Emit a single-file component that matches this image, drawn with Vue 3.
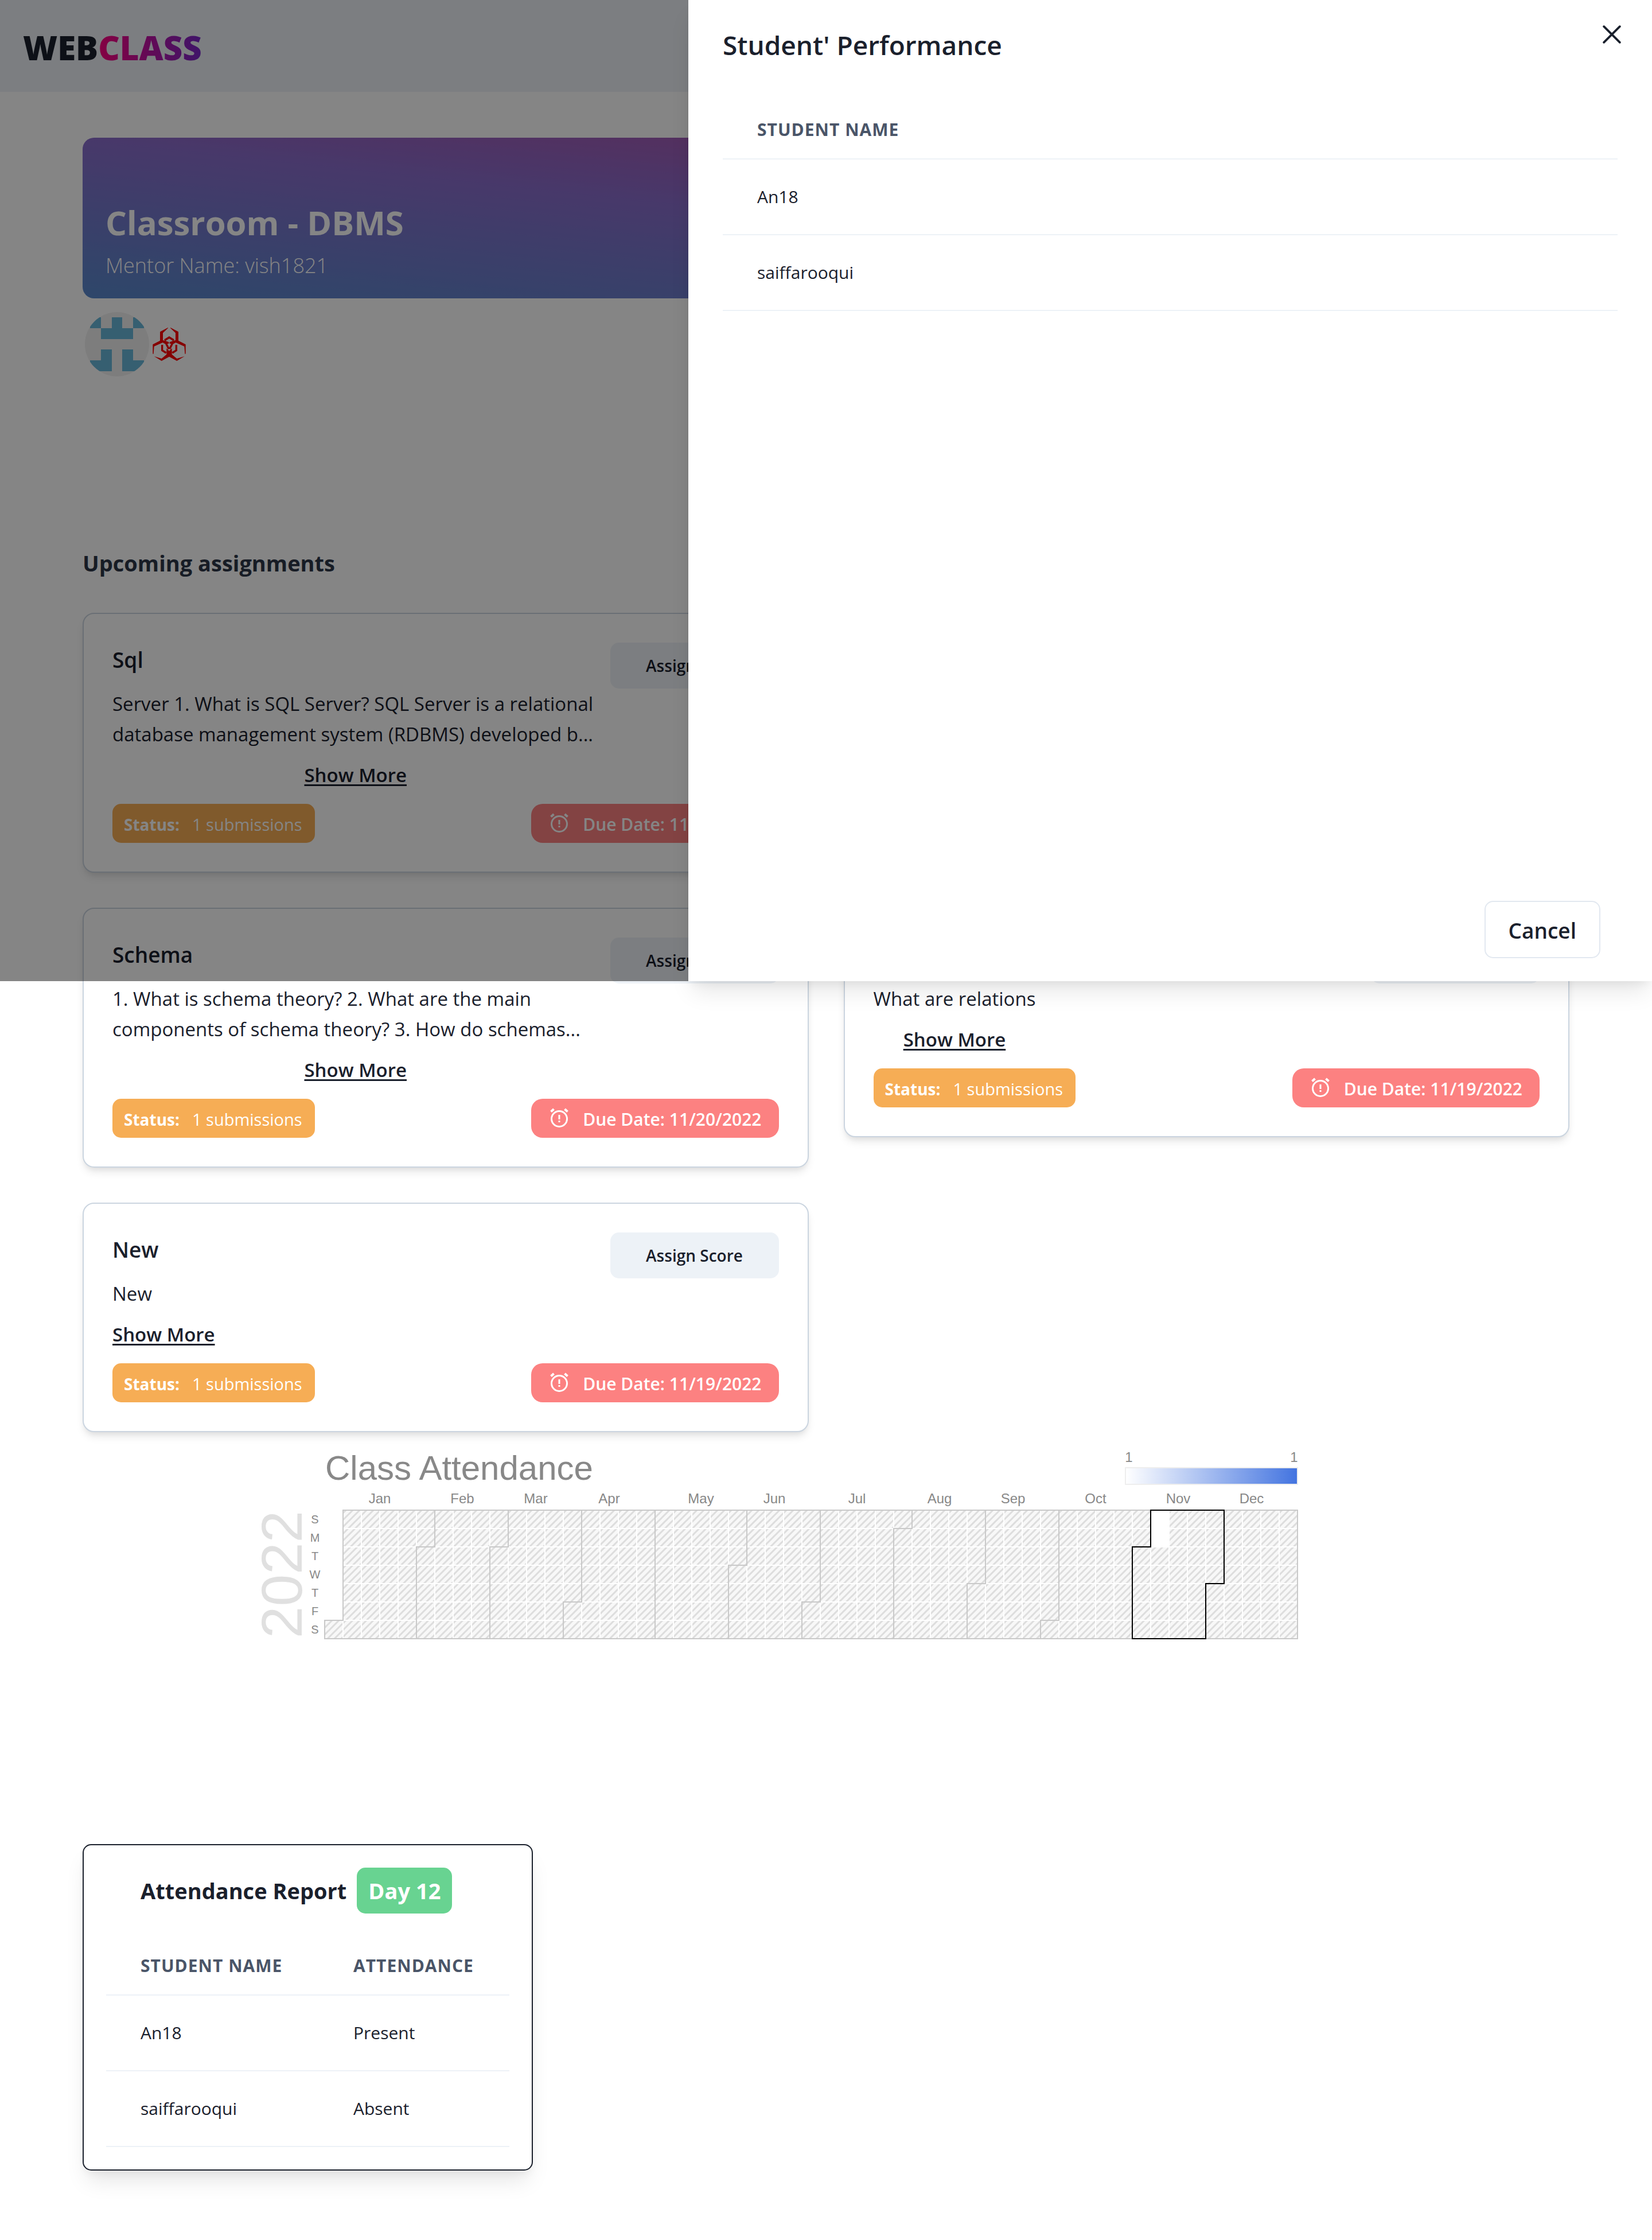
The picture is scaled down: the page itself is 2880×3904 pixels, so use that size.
<script setup>
const assignments = [
  { title: 'Sql', place: 'left', text: 'Server 1. What is SQL Server? SQL Server is a relational database management system (RDBMS) developed b...', due: '11/20/2022' },
  { title: 'Schema', place: 'left', text: '1. What is schema theory? 2. What are the main components of schema theory? 3. How do schemas...', due: '11/20/2022' },
  { title: '', place: 'right', text: 'What are relations', due: '11/19/2022' },
  { title: 'New', place: 'left', text: 'New', due: '11/19/2022' },
]

const students = ['An18', 'saiffarooqui']
const report = [
  { name: 'An18', status: 'Present' },
  { name: 'saiffarooqui', status: 'Absent' },
]

// 5x5 identicon, as [column, row] pairs of filled cells
const identicon = [[0, 0], [2, 0], [4, 0], [1, 1], [2, 1], [3, 1], [1, 3], [3, 3], [0, 4], [1, 4], [3, 4], [4, 4]]

// Calendar chart geometry
const CELL = 32
const LEFT = 126
const TOP = 113
const WEEKS = 53
const bottom = TOP + 7 * CELL
const right = LEFT + WEEKS * CELL
const yearOffset = new Date(2022, 0, 1).getDay()

function slot(month) {
  const day = Math.round((Date.UTC(2022, month, 1) - Date.UTC(2022, 0, 1)) / 86400000) + yearOffset
  return { x: LEFT + Math.floor(day / 7) * CELL, y: TOP + (day % 7) * CELL, row: day % 7 }
}

// Left-hand edge of a month, drawn from the bottom of the grid to its top
function edge(month) {
  const s = slot(month)
  return s.row === 0
    ? [[s.x, bottom], [s.x, TOP]]
    : [[s.x, bottom], [s.x, s.y], [s.x + CELL, s.y], [s.x + CELL, TOP]]
}
const toPath = (points) => 'M' + points.map((p) => p.join(' ')).join('L')

const yearOutline = toPath([...edge(0), [right, TOP], [right, bottom]]) + 'Z'
const monthEdges = Array.from({ length: 11 }, (_, i) => toPath(edge(i + 1)))
const november = toPath([...edge(10), ...edge(11).reverse()]) + 'Z'
const gridLines =
  Array.from({ length: WEEKS - 1 }, (_, i) => `M${LEFT + (i + 1) * CELL} ${TOP}V${bottom}`).join('') +
  Array.from({ length: 6 }, (_, i) => `M${LEFT} ${TOP + (i + 1) * CELL}H${right}`).join('')

const months = [
  ['Jan', 222], ['Feb', 366], ['Mar', 494], ['Apr', 622], ['May', 782], ['Jun', 910],
  ['Jul', 1054], ['Aug', 1198], ['Sep', 1326], ['Oct', 1470], ['Nov', 1614], ['Dec', 1742],
]
const weekdays = ['S', 'M', 'T', 'W', 'T', 'F', 'S']
</script>

<template>
  <div class="page">
    <header class="topbar">
      <div class="logo">WEB<span>CLASS</span></div>
    </header>

    <main class="content">
      <section class="banner">
        <h1>Classroom - DBMS</h1>
        <p>Mentor Name: vish1821</p>
      </section>

      <div class="avatars">
        <svg class="avatar" viewBox="0 0 112 112" aria-hidden="true">
          <defs>
            <clipPath id="round"><circle cx="56" cy="56" r="56" /></clipPath>
          </defs>
          <g clip-path="url(#round)">
            <rect width="112" height="112" fill="#f0f0f0" />
            <g transform="translate(9 9) scale(18.8)" fill="#68b7d9" shape-rendering="crispEdges">
              <rect v-for="[x, y] in identicon" :key="`${x}-${y}`" :x="x" :y="y" width="1" height="1" />
            </g>
          </g>
        </svg>
        <svg class="hazard" viewBox="0 0 172 174" aria-hidden="true">
          <g fill="#ff0000">
            <path d="M79 0L38 22V68L0 88V137H4L7 98L52 78L66 86L84 83V76L66 69L53 66V28L80 2Z" />
            <path d="M93 0L134 22V68L172 88V137H168L165 98L120 78L106 86L88 83V76L106 69L119 66V28L92 2Z" />
            <path d="M7 150L46 162L72 140V108L86 122L100 108V140L126 162L166 150L126 174L86 152L46 174Z" />
          </g>
          <g fill="none" stroke="#ff0000" stroke-width="10">
            <path d="M62 66L86 51L110 66" />
            <path d="M49 90V119L70 132" />
            <path d="M123 90V119L102 132" />
            <path d="M70 84L84 112" />
            <path d="M102 84L88 112" />
          </g>
        </svg>
      </div>

      <h2 class="section-title">Upcoming assignments</h2>

      <section class="assignments">
        <article v-for="(a, i) in assignments" :key="i" class="card" :class="a.place">
          <div class="card-top">
            <div class="card-text">
              <h3>{{ a.title }}</h3>
              <div class="description">
                <p>{{ a.text }}</p>
                <button type="button" class="more">Show More</button>
              </div>
            </div>
            <button type="button" class="assign">Assign Score</button>
          </div>
          <div class="card-bottom">
            <div class="status"><b>Status:</b><span>1 submissions</span></div>
            <div class="due">
              <svg viewBox="0 0 34 34" aria-hidden="true" fill="none" stroke="#fff" stroke-width="3">
                <circle cx="17" cy="19" r="13.5" />
                <path d="M2.5 6.5L7.5 2M31.5 6.5L26.5 2" stroke-width="4" />
                <path d="M17 12V20M17 22V25" />
              </svg>
              <span>Due Date: {{ a.due }}</span>
            </div>
          </div>
        </article>
      </section>

      <svg class="calendar" viewBox="0 0 1840 360" role="img" aria-label="Class Attendance">
        <defs>
          <pattern id="hatch" width="12" height="12" patternUnits="userSpaceOnUse">
            <rect width="12" height="12" fill="#f8f8f8" />
            <path d="M-2 14L14 -2M-2 2L2 -2M10 14L14 10" stroke="#dddddd" stroke-width="3" />
          </pattern>
          <linearGradient id="scale">
            <stop offset="0" stop-color="#ffffff" />
            <stop offset="1" stop-color="#4374e0" />
          </linearGradient>
        </defs>

        <text x="127" y="60" class="chart-title">Class Attendance</text>
        <text x="1528" y="29" class="label" text-anchor="middle">1</text>
        <text x="1816" y="29" class="label" text-anchor="middle">1</text>
        <rect x="1522" y="39" width="300" height="29" fill="url(#scale)" stroke="#eeeeee" stroke-width="2" />

        <text v-for="[name, x] in months" :key="name" :x="x" y="101" class="label" text-anchor="middle">{{ name }}</text>
        <text v-for="(d, i) in weekdays" :key="i" x="109" :y="136 + i * 32" class="day" text-anchor="middle">{{ d }}</text>
        <text transform="translate(86 225) rotate(-90)" class="year" text-anchor="middle">2022</text>

        <path :d="yearOutline" fill="url(#hatch)" />
        <path :d="gridLines" stroke="#ffffff" stroke-width="2" />
        <rect :x="LEFT + 45 * CELL" :y="TOP" :width="CELL" :height="2 * CELL" fill="#ffffff" />
        <g fill="none" stroke="#c9c9c9" stroke-width="2">
          <path v-for="(d, i) in monthEdges" :key="i" :d="d" />
          <path :d="yearOutline" />
        </g>
        <path :d="november" fill="none" stroke="#000000" stroke-width="2" />
      </svg>

      <section class="report">
        <div class="report-head">
          <h2>Attendance Report</h2>
          <span class="badge">Day 12</span>
        </div>
        <table>
          <thead>
            <tr><th class="name">Student Name</th><th>Attendance</th></tr>
          </thead>
          <tbody>
            <tr v-for="r in report" :key="r.name"><td>{{ r.name }}</td><td>{{ r.status }}</td></tr>
          </tbody>
        </table>
      </section>
    </main>

    <div class="overlay">
      <aside class="drawer" role="dialog" aria-labelledby="drawer-title">
        <button type="button" class="close" aria-label="Close">
          <svg viewBox="0 0 30 30" aria-hidden="true"><path d="M2 2L28 28M28 2L2 28" stroke="#1a202c" stroke-width="3.5" stroke-linecap="round" /></svg>
        </button>
        <h2 id="drawer-title">Student' Performance</h2>
        <div class="drawer-body">
          <table>
            <thead>
              <tr><th>Student Name</th></tr>
            </thead>
            <tbody>
              <tr v-for="s in students" :key="s"><td>{{ s }}</td></tr>
            </tbody>
          </table>
        </div>
        <footer><button type="button" class="cancel">Cancel</button></footer>
      </aside>
    </div>
  </div>
</template>

<style>
body {
  margin: 0;
  background: #ffffff;
}
</style>

<style scoped>
.page {
  position: relative;
  min-height: 100vh;
  box-sizing: border-box;
  padding-bottom: 120px;
  color: #1a202c;
  font-family: "Open Sans", "Noto Sans", sans-serif;
}
h1, h2, h3, p {
  margin: 0;
}
button {
  border: 0;
  padding: 0;
  background: none;
  color: inherit;
  font-family: inherit;
  cursor: pointer;
}
.topbar {
  display: flex;
  align-items: center;
  box-sizing: border-box;
  height: 160px;
  padding: 4px 40px 0;
  background: #edf2f7;
}
.logo {
  font-size: 58px;
  font-weight: 800;
}
.logo span {
  background: linear-gradient(to left, #7928ca, #ff0080);
  background-clip: text;
  -webkit-background-clip: text;
  color: transparent;
}
.content {
  padding: 80px 144px 0;
}
.banner {
  display: flex;
  flex-direction: column;
  justify-content: flex-end;
  gap: 10px;
  box-sizing: border-box;
  min-height: 280px;
  padding: 32px 40px;
  border-radius: 20px;
  background: linear-gradient(to top right, #5888cc, #8a6ccb 50%, #a05db8 70%, #c0529f);
  color: #ffffff;
}
.banner h1 {
  font-size: 58px;
  line-height: 80px;
  font-weight: 700;
}
.banner p {
  font-size: 36px;
  line-height: 50px;
  font-weight: 300;
}
.avatars {
  display: flex;
  align-items: center;
  gap: 6px;
  margin-top: 24px;
  padding-left: 4px;
}
.avatar {
  width: 112px;
  height: 112px;
}
.hazard {
  width: 58px;
  height: 58px;
}
.section-title {
  margin: 295px 0 57px;
  color: #2d3748;
  font-size: 38px;
  line-height: 60px;
  font-weight: 700;
}
.assignments {
  display: grid;
  grid-template-columns: 1fr 1fr;
  gap: 61px;
  align-items: start;
}
.card {
  border: 2px solid #cbd5e0;
  border-radius: 20px;
  padding: 50px;
  background: #ffffff;
  box-shadow: 0 10px 15px -3px rgba(0, 0, 0, 0.1), 0 5px 10px -3px rgba(0, 0, 0, 0.06);
}
.card.left {
  grid-column: 1;
}
.card.right {
  grid-column: 2;
}
.card-top {
  display: flex;
  align-items: flex-start;
  gap: 20px;
}
.card-text {
  flex: 1;
}
.card h3 {
  min-height: 60px;
  margin-bottom: 20px;
  font-size: 37px;
  line-height: 60px;
  font-weight: 600;
}
.description {
  display: flex;
  flex-direction: column;
  align-items: center;
  gap: 18px;
  width: fit-content;
}
.description p {
  align-self: flex-start;
  font-size: 33px;
  line-height: 53px;
}
.more {
  font-size: 33px;
  line-height: 53px;
  font-weight: 600;
  text-decoration: underline;
  text-decoration-thickness: 3px;
  text-decoration-skip-ink: none;
  text-underline-offset: 4px;
}
.assign {
  width: 294px;
  height: 80px;
  border-radius: 15px;
  background: #edf2f7;
  font-size: 28px;
  font-weight: 600;
}
.card-bottom {
  display: flex;
  justify-content: space-between;
  margin-top: 24px;
  color: #ffffff;
  line-height: 64px;
}
.status {
  display: flex;
  gap: 22px;
  padding: 4px 22px 0 20px;
  border-radius: 15px;
  background: #f6ad55;
  font-size: 29px;
}
.status b {
  font-size: 28px;
  font-weight: 700;
}
.due {
  display: flex;
  align-items: center;
  gap: 24px;
  padding: 4px 30px 0 32px;
  border-radius: 20px;
  background: #fc8181;
  font-size: 30px;
  font-weight: 600;
}
.due svg {
  width: 34px;
  height: 34px;
  margin-bottom: 6px;
}
.calendar {
  display: block;
  width: 100%;
  max-width: 1840px;
  margin: 23px 0 0 296px;
  font-family: "Liberation Sans", Arial, sans-serif;
}
.chart-title {
  font-size: 60px;
  fill: #888888;
}
.label {
  font-size: 24px;
  fill: #888888;
}
.day {
  font-size: 20px;
  fill: #888888;
}
.year {
  font-size: 100px;
  fill: #e0e0e0;
}
.report {
  box-sizing: border-box;
  width: 785px;
  margin-top: 335px;
  padding: 39px;
  border: 2px solid #1a202c;
  border-radius: 15px;
  background: #ffffff;
  box-shadow: 0 25px 38px -8px rgba(0, 0, 0, 0.1), 0 10px 15px -5px rgba(0, 0, 0, 0.05);
}
.report-head {
  display: flex;
  gap: 18px;
  margin-bottom: 41px;
  padding-left: 60px;
  line-height: 80px;
}
.report-head h2 {
  font-size: 38px;
  font-weight: 700;
}
.badge {
  padding: 0 20px;
  border-radius: 15px;
  background: #68d391;
  color: #ffffff;
  font-size: 38px;
  font-weight: 700;
}
table {
  width: 100%;
  border-collapse: separate;
  border-spacing: 0;
  text-align: left;
}
th {
  padding: 30px 60px;
  border-bottom: 2px solid #edf2f7;
  color: #4a5568;
  font-size: 30px;
  line-height: 40px;
  font-weight: 700;
  letter-spacing: 1px;
  text-transform: uppercase;
  white-space: nowrap;
}
th.name {
  width: 251px;
}
td {
  padding: 40px 60px;
  border-bottom: 2px solid #edf2f7;
  font-size: 30px;
  line-height: 50px;
}
.overlay {
  position: absolute;
  top: 0;
  left: 0;
  right: 0;
  display: flex;
  justify-content: flex-end;
  min-height: 1710px;
  background: rgba(0, 0, 0, 0.48);
}
.drawer {
  position: relative;
  display: flex;
  flex-direction: column;
  width: 100%;
  max-width: 1680px;
  background: #ffffff;
  box-shadow: 0 25px 38px -8px rgba(0, 0, 0, 0.1), 0 10px 15px -5px rgba(0, 0, 0, 0.05);
}
.drawer h2 {
  padding: 40px 60px;
  font-size: 46px;
  line-height: 76px;
  font-weight: 600;
}
.close {
  position: absolute;
  top: 20px;
  right: 30px;
  display: flex;
  align-items: center;
  justify-content: center;
  width: 80px;
  height: 80px;
}
.close svg {
  width: 32px;
  height: 32px;
}
.drawer-body {
  flex: 1;
  padding: 20px 60px;
}
.drawer footer {
  display: flex;
  justify-content: flex-end;
  padding: 40px 90px;
}
.cancel {
  box-sizing: border-box;
  height: 100px;
  padding: 2px 40px 0;
  border: 2px solid #e2e8f0;
  border-radius: 15px;
  font-size: 37px;
  font-weight: 600;
}
</style>
